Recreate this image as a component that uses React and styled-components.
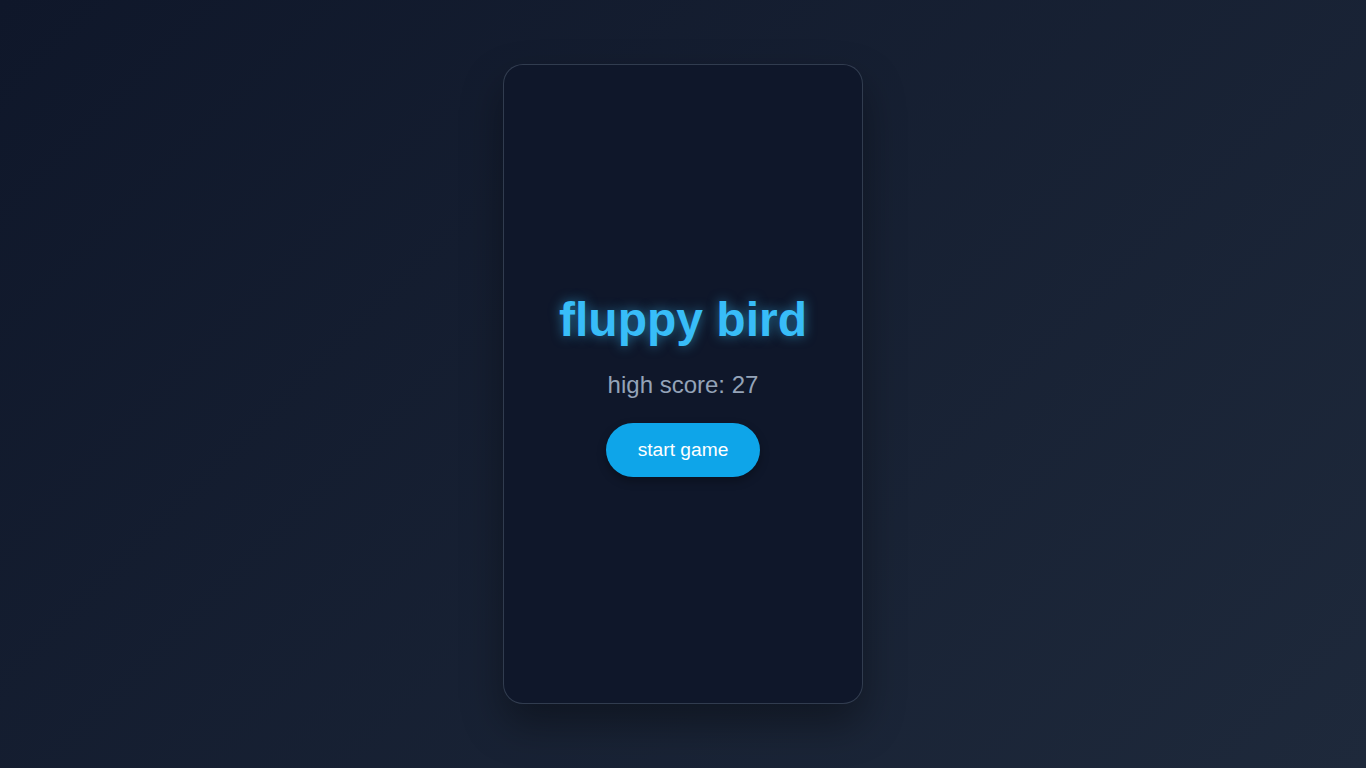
import React from 'react';
import styled, { createGlobalStyle } from 'styled-components';

const GlobalStyle = createGlobalStyle`
    html, body {
        margin: 0;
        padding: 0;
        height: 100%;
    }
    body {
        font-family: "Liberation Sans", Arial, sans-serif;
        background: linear-gradient(135deg, #0f172a 0%, #1e293b 100%);
        min-height: 100vh;
    }
    #root {
        min-height: 100vh;
    }
`;

const Page = styled.div`
    min-height: 100vh;
    display: flex;
    align-items: center;
    justify-content: center;
`;

const GameCard = styled.div`
    width: 360px;
    height: 640px;
    box-sizing: border-box;
    background-color: #0f172a;
    border: 1px solid rgba(71, 85, 105, 0.6);
    border-radius: 20px;
    box-shadow: 0 20px 40px rgba(0, 0, 0, 0.35);
    display: flex;
    flex-direction: column;
    align-items: center;
    justify-content: center;
    overflow: hidden;
`;

const Title = styled.h1`
    margin: 0 0 24px;
    font-size: 48px;
    font-weight: bold;
    color: #38bdf8;
    text-shadow: 0 0 12px rgba(56, 189, 248, 0.55);
`;

const Score = styled.p`
    margin: 0 0 24px;
    font-size: 24px;
    color: #94a3b8;
`;

const StartButton = styled.button`
    border: none;
    border-radius: 9999px;
    padding: 16px 32px;
    font-family: "Liberation Sans", Arial, sans-serif;
    font-size: 19.2px;
    font-weight: normal;
    color: #ffffff;
    background-color: #0ea5e9;
    box-shadow: 0 4px 10px rgba(0, 0, 0, 0.3);
    cursor: pointer;
`;

export default function App() {
    return (
        <>
            <GlobalStyle />
            <Page>
                <GameCard>
                    <Title>fluppy bird</Title>
                    <Score>high score: 27</Score>
                    <StartButton>start game</StartButton>
                </GameCard>
            </Page>
        </>
    );
}
